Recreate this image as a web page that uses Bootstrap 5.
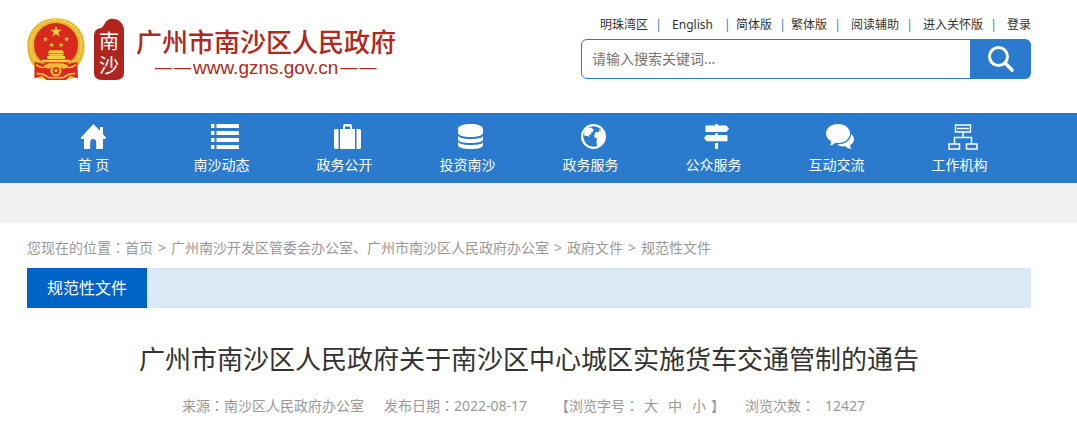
<!DOCTYPE html>
<html lang="zh-CN">
<head>
<meta charset="utf-8">
<meta name="viewport" content="width=device-width, initial-scale=1">
<title>广州市南沙区人民政府</title>
<link href="https://cdn.jsdelivr.net/npm/bootstrap@5.3.0/dist/css/bootstrap.min.css" rel="stylesheet">
<style>
  :root { --gov-blue: #2a7acd; --gov-red: #b02820; }
  body { font-family: "Noto Sans", "Noto Sans CJK SC", sans-serif; font-size: 14px; line-height: 20px; color: #333; background: #fff; }
  a { color: inherit; text-decoration: none; }
  .page-wrap { padding-left: 27px; padding-right: 46px; }
  .mid-punct { font-family: "Noto Sans CJK TC", sans-serif; line-height: 1; }

  .site-head { height: 113px; padding-top: 15px; }
  .logo-name { font-size: 26px; line-height: 30px; font-weight: 500; font-family: "Liberation Sans", "Noto Sans CJK SC", sans-serif; }
  .logo-url { font-family: "Liberation Sans", sans-serif; font-size: 19px; line-height: 20px; gap: 2px; margin-left: 19px; }
  .logo-dash { font-size: 17px; }
  .site-logo { color: var(--gov-red); gap: 9px; padding-top: 3px; }
  .logo-text { margin-left: 2px; padding-top: 10px; }

  .head-side { width: 450px; }
  .top-links { font-size: 12px; line-height: 20px; margin-bottom: 4px; }
  .bar { color: var(--gov-blue); width: 7px; text-align: center; margin: 0 10px 0 7px; }
  .bar-tight { margin-right: 5px; }
  .bar-late { margin-left: 11px; }
  .search-box { height: 40px; }
  .search-box .form-control { border: 1px solid var(--gov-blue); border-radius: 6px; font-size: 14px; padding: 0 10px 2px; color: #333; }
  .search-box .form-control::placeholder { color: #757575; }
  .search-box .btn { width: 61px; background: var(--gov-blue); border-radius: 6px; padding: 0; border: 0; }

  .main-nav { background: var(--gov-blue); height: 70px; }
  .main-nav ul { padding-right: 10px; }
  .main-nav li { flex: 123 1 0; }
  .main-nav li:first-child { flex-grow: 133; }
  .main-nav .nav-link { color: #fff; padding: 11px 0 0; line-height: 20px; text-align: center; }
  .main-nav svg { display: block; margin: 0 auto 5px; height: 26px; fill: #fff; }
  .main-nav li + li .nav-icon { padding-left: 6px; }

  .grey-band { height: 40px; background: #f1f1f1; }
  .crumbs { color: #999; height: 45px; padding-top: 15px; --bs-breadcrumb-divider: '>'; }
  .crumbs .breadcrumb-item + .breadcrumb-item { padding-left: 5px; }
  .crumbs .breadcrumb-item + .breadcrumb-item::before { color: #999; padding-right: 5px; }
  .section-bar { background: #dceaf8; height: 40px; }
  .section-bar a { background: #0063c8; color: #fff; font-size: 16px; width: 120px; line-height: 40px; text-align: center; }
  .doc-title { font-size: 26px; line-height: 40px; font-weight: 400; padding-top: 31px; margin-bottom: 17px; }
  .doc-meta { color: #999; gap: 20px; padding-right: 11px; }
  .doc-date { min-width: 151px; }
  .size-links { gap: 10px; margin: 0 5px; }
  .hits { margin-left: 10px; }
</style>
</head>
<body>
<header class="site-head page-wrap d-flex justify-content-between align-items-start">
  <a href="#" class="site-logo d-flex align-items-start" aria-label="广州市南沙区人民政府">
    <svg width="58" height="62" viewBox="20 26 174 186" aria-hidden="true">
      <path fill="#e9b62d" d="M107 27C56 27 21 63 21 110c0 31 9 53 28 67l-4 28 33 5h58l32-5-4-28c18-15 29-38 29-67 0-47-35-83-86-83z"/>
      <g fill="none" stroke="#f7dc61" stroke-width="5" stroke-dasharray="6 4"><circle cx="107" cy="108" r="76"/></g>
      <circle cx="107" cy="107" r="66" fill="#d9281d"/>
      <path fill="#d9281d" d="M43 157l28 7 15-5h42l15 5 28-7 2 50-24-8-12 13H78l-12-13-24 8z"/>
      <path fill="#f5ce42" d="M107 49l4 12h13l-10 8 4 13-11-8-11 8 4-13-10-8h13zM75 82l2 5h6l-5 4 2 6-5-4-5 4 2-6-5-4h6zM139 82l2 5h6l-5 4 2 6-5-4-5 4 2-6-5-4h6zM94 99l2 5h6l-5 4 2 6-5-4-5 4 2-6-5-4h6zM122 99l2 5h6l-5 4 2 6-5-4-5 4 2-6-5-4h6z"/>
      <path fill="#f5ce42" d="M87 123h40l5 9H82zM85 133h44v6H85zM80 140h54v9H80zM62 151h90l-4 8H66z"/>
      <path fill="#efbb32" d="M70 168l18-6h38l18 6-12 11-25-9-25 9z"/>
      <circle cx="107" cy="184" r="17" fill="#f0bc31"/><circle cx="107" cy="184" r="10" fill="#d9281d"/><circle cx="107" cy="184" r="5" fill="#f0bc31"/>
      <path fill="none" stroke="#f0c33a" stroke-width="5" d="M47 166c14 12 27 10 38 2M167 166c-14 12-27 10-38 2M49 193c18-2 29 6 36 12h44c7-6 18-14 36-12"/>
    </svg>
    <svg width="31" height="62" viewBox="0 0 31 62" aria-hidden="true">
      <path fill="#b0241e" d="M0 17Q0 11 7 10C10 9 11 2 16 1c7-1 13 3 14 10v44q0 7-8 7H8q-8 0-8-7z"/>
      <g fill="#fff" font-family="Liberation Sans, Noto Sans CJK SC, sans-serif" font-size="20" text-anchor="middle"><text x="15" y="31">南</text><text x="15" y="55">沙</text></g>
    </svg>
    <span class="logo-text">
      <span class="logo-name d-block">广州市南沙区人民政府</span>
      <span class="logo-url d-flex"><span class="logo-dash">—</span><span class="logo-dash">—</span><span>www.gzns.gov.cn</span><span class="logo-dash">—</span><span class="logo-dash">—</span></span>
    </span>
  </a>
  <div class="head-side">
    <div class="top-links d-flex justify-content-end text-nowrap">
      <a href="#">明珠湾区</a><span class="bar">|</span><a href="#">English</a><span class="bar bar-late bar-tight">|</span><a href="#">简体版</a><span class="bar bar-tight">|</span><a href="#">繁体版</a><span class="bar">|</span><a href="#">阅读辅助</a><span class="bar">|</span><a href="#">进入关怀版</a><span class="bar">|</span><a href="#">登录</a>
    </div>
    <form class="search-box input-group" role="search">
      <input type="text" class="form-control" placeholder="请输入搜索关键词..." aria-label="请输入搜索关键词">
      <button type="button" class="btn" aria-label="搜索">
        <svg width="26" height="26" viewBox="0 0 26 26" fill="none" stroke="#fff" aria-hidden="true"><circle cx="10.500" cy="10.500" r="9" stroke-width="3"/><path d="M17 17L24 24" stroke-width="3.600" stroke-linecap="round"/></svg>
      </button>
    </form>
  </div>
</header>

<nav class="main-nav page-wrap" aria-label="主导航">
  <ul class="nav flex-nowrap">
    <li class="nav-item"><a class="nav-link" href="#"><span class="nav-icon d-block"><svg width="25" viewBox="0 0 25 26"><path d="M12.500 0L0 13.500v1.500h3v10h6.200v-7c0-2 1.300-3 3-3s3 1 3 3v7H22V15h3v-1.500l-3-3.200V3h-3v4z"/></svg></span>首 页</a></li>
    <li class="nav-item"><a class="nav-link" href="#"><span class="nav-icon d-block"><svg width="28" viewBox="0 0 28 26"><path d="M0 0h3.500v4H0zM5.500 0H28v4H5.500zM0 7h3.500v4H0zM5.500 7H28v4H5.500zM0 14h3.500v4H0zM5.500 14H28v4H5.500zM0 21h3.500v4H0zM5.500 21H28v4H5.500z"/></svg></span>南沙动态</a></li>
    <li class="nav-item"><a class="nav-link" href="#"><span class="nav-icon d-block"><svg width="27" viewBox="0 0 27 26"><path fill-rule="evenodd" d="M6 5h3V2q0-2 2-2h5q2 0 2 2v3h3v20H6zM11 2.500V5h5V2.500zM1.500 5H4.500v20h-3Q0 25 0 23.500v-17Q0 5 1.500 5zM22.500 5h3Q27 5 27 6.500v17q0 1.500-1.500 1.500h-3z"/></svg></span>政务公开</a></li>
    <li class="nav-item"><a class="nav-link" href="#"><span class="nav-icon d-block"><svg width="25" viewBox="0 0 25 26"><path d="M0 5C0 2 5 0 12.500 0S25 2 25 5v3.500c0 3-5 4.500-12.500 4.500S0 11.500 0 8.500zM0 12c2 2.200 7 3 12.500 3S25 14.200 25 12v3.500c0 2.500-6 3.500-12.500 3.500S0 18 0 15.500zM0 18c2 2.200 7 3 12.500 3S25 20.200 25 18v3c0 2.800-5 4-12.500 4S0 23.800 0 21z"/></svg></span>投资南沙</a></li>
    <li class="nav-item"><a class="nav-link" href="#"><span class="nav-icon d-block"><svg width="25" viewBox="0 0 25 26"><circle cx="12.500" cy="12.500" r="11.400" fill="none" stroke="#fff" stroke-width="2.200"/><path d="M3.500 7L6 4l4-.5 2.500 2-.5 2.500-2 .5.500 1.500-2.500 1 .5 2-2-1-3.500-.5zM13.500 10l1.500-2 3 0 .5-2.500 3 1 2 6-1 6-3.500 3.500-3 0-.5-4 .5-3.500-2.500-1z"/></svg></span>政务服务</a></li>
    <li class="nav-item"><a class="nav-link" href="#"><span class="nav-icon d-block"><svg width="25" viewBox="0 0 25 26"><path d="M11 0h3v1.500h8.500L25 4.700 22.500 8H2Q1.500 8 1.500 7.500V2q0-.5.500-.5h9zM11 9.500h3V11h9q.5 0 .5.500v5.300q0 .5-.5.500H2.500L0 14l2.500-3H11zM11 19h3v6h-3z"/></svg></span>公众服务</a></li>
    <li class="nav-item"><a class="nav-link" href="#"><span class="nav-icon d-block"><svg width="28" viewBox="0 0 28 26"><path d="M12 0c7 0 12 4.200 12 9.500S19 19 12 19l-2.500-.2Q7 21.200 3.500 21.500 5 20 5.200 17.200C2 15.500 0 12.700 0 9.500 0 4.200 5 0 12 0z"/><path d="M25.200 10C27 11.500 28 13.300 28 15.300c0 2.500-1.500 4.500-3.800 5.700Q24 23.500 25.500 25q-4 0-6.300-2.700c-3 .4-6-.2-8.200-1.800C18.500 20.500 25 16.500 25.200 10z"/></svg></span>互动交流</a></li>
    <li class="nav-item"><a class="nav-link" href="#"><span class="nav-icon d-block"><svg width="30" viewBox="0 0 30 26"><path fill="none" stroke="#fff" stroke-width="1.500" d="M7.500 1h15v7h-15zM9 4.500h12M15 8v5.500M6.500 20v-6.500h17V20M1 20h10.500v5H1zM18.500 20H29v5H18.500z"/></svg></span>工作机构</a></li>
  </ul>
</nav>
<div class="grey-band"></div>

<main class="page-wrap">
  <nav class="crumbs d-flex align-items-start" aria-label="位置">
    <span>您现在的位置<span class="mid-punct" lang="zh-TW">：</span></span>
    <ol class="breadcrumb m-0">
      <li class="breadcrumb-item"><a href="#">首页</a></li>
      <li class="breadcrumb-item"><a href="#">广州南沙开发区管委会办公室、广州市南沙区人民政府办公室</a></li>
      <li class="breadcrumb-item"><a href="#">政府文件</a></li>
      <li class="breadcrumb-item"><a href="#">规范性文件</a></li>
    </ol>
  </nav>
  <div class="section-bar d-flex"><a href="#">规范性文件</a></div>
  <article>
    <h1 class="doc-title text-center">广州市南沙区人民政府关于南沙区中心城区实施货车交通管制的通告</h1>
    <div class="doc-meta d-flex justify-content-center text-nowrap">
      <span>来源<span class="mid-punct" lang="zh-TW">：</span>南沙区人民政府办公室</span>
      <span class="doc-date">发布日期<span class="mid-punct" lang="zh-TW">：</span>2022-08-17</span>
      <span class="d-flex"><span>【浏览字号<span class="mid-punct" lang="zh-TW">：</span></span><span class="size-links d-flex"><a href="#">大</a><a href="#">中</a><a href="#">小</a></span><span>】</span></span>
      <span>浏览次数<span class="mid-punct" lang="zh-TW">：</span><span class="hits">12427</span></span>
    </div>
  </article>
</main>
<script src="https://cdn.jsdelivr.net/npm/bootstrap@5.3.0/dist/js/bootstrap.bundle.min.js"></script>
</body>
</html>
